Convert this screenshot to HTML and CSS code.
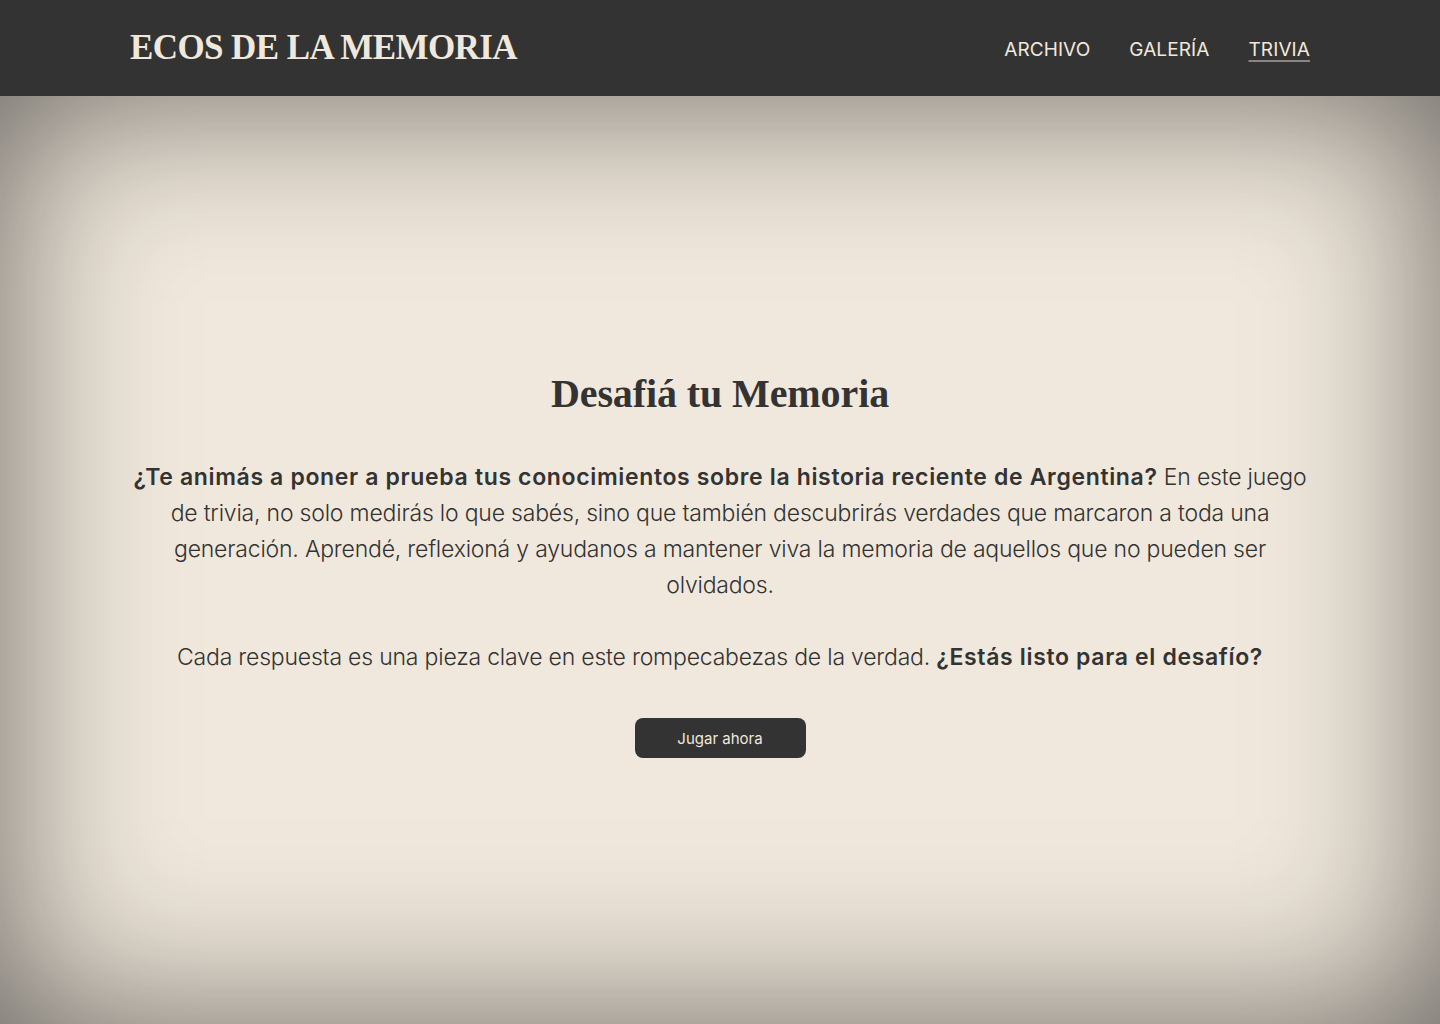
FILE: index.html
```html
<!DOCTYPE html>
<html lang="es">

<head>
  <meta charset="UTF-8" />
  <title>Ecos de la Memoria - Trivia</title>
  <link rel="stylesheet" href="styles.css">
</head>

<body>
  <header id="topBar">
    <div class="barInner">
      <a class="logo" href="#">ECOS DE LA MEMORIA</a>
      <nav class="mainNav">
        <a href="#">ARCHIVO</a>
        <a href="#">GALERÍA</a>
        <a href="#" class="active">TRIVIA</a>
      </nav>
    </div>
  </header>

  <main id="triviaIntro">
    <section class="introBox">
      <h1>Desafiá tu Memoria</h1>
      <p>
        <strong>¿Te animás a poner a prueba tus conocimientos sobre la historia reciente de Argentina?</strong>
        En este juego de trivia, no solo medirás lo que sabés, sino que también descubrirás verdades que marcaron a toda una generación. Aprendé, reflexioná y ayudanos a mantener viva la memoria de aquellos que no pueden ser olvidados.
      </p>
      <p>
        Cada respuesta es una pieza clave en este rompecabezas de la verdad. <strong>¿Estás listo para el desafío?</strong>
      </p>
      <button class="playBtn" type="button">Jugar ahora</button>
    </section>
  </main>
</body>

</html>
```

FILE: styles.css
```css
body {
  margin: 0;
  font-family: 'Inter', 'Lato', sans-serif;
  background-color: #f0e8dc;
  color: #333;
}

a {
  text-decoration: none;
  color: inherit;
}

/* Top bar */
#topBar {
  background-color: #333;
  height: 96px;
  display: flex;
  align-items: center;
}

.barInner {
  width: 1180px;
  margin: 0 auto;
  display: flex;
  align-items: center;
  justify-content: space-between;
}

.logo {
  font-family: 'Liberation Serif', serif;
  font-weight: bold;
  font-size: 35px;
  letter-spacing: -0.6px;
  color: #f0e8dc;
}

.mainNav {
  display: flex;
  gap: 39px;
  padding-top: 2px;
}

.mainNav a {
  color: #f0e8dc;
  font-size: 19px;
  letter-spacing: 0.1px;
}

.mainNav a.active {
  text-decoration: underline;
  text-decoration-color: #8a8580;
  text-decoration-thickness: 2px;
  text-underline-offset: 4px;
}

/* Main area with vignette */
#triviaIntro {
  min-height: calc(100vh - 96px);
  box-shadow: inset 0 0 170px rgba(0, 0, 0, 0.58);
  display: flex;
  align-items: center;
  justify-content: center;
}

.introBox {
  width: 1180px;
  text-align: center;
  padding-top: 8px;
}

.introBox h1 {
  font-family: 'Liberation Serif', serif;
  font-size: 40px;
  font-weight: bold;
  margin: 0 0 42px;
  letter-spacing: -0.1px;
}

.introBox p {
  font-size: 23px;
  font-weight: 300;
  letter-spacing: -0.2px;
  line-height: 36px;
  margin: 0 0 36px;
}

.introBox strong {
  font-weight: 600;
  letter-spacing: 0.65px;
}

.playBtn {
  margin-top: 7px;
  width: 171px;
  height: 40px;
  border: none;
  border-radius: 8px;
  background-color: #333;
  color: #f0e8dc;
  font-family: 'Inter', sans-serif;
  font-size: 15px;
  cursor: pointer;
}
```
